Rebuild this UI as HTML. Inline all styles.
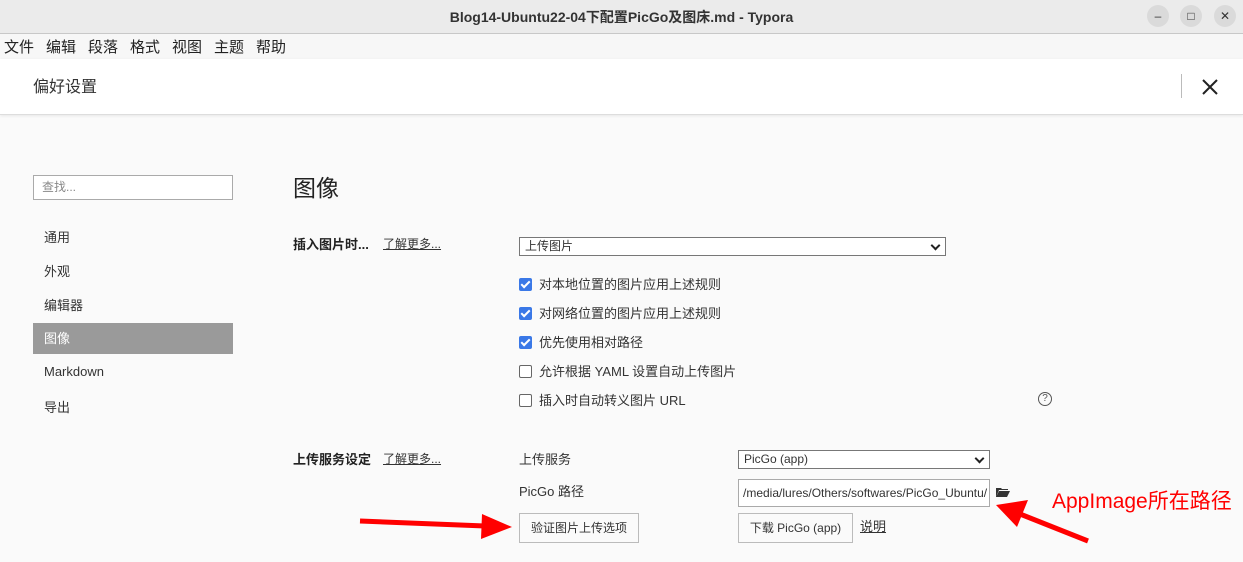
<!DOCTYPE html>
<html><head><meta charset="utf-8"><style>
*{box-sizing:border-box;margin:0;padding:0}
body{width:1243px;height:562px;overflow:hidden;background:#fafafa;font-family:"Liberation Sans","Noto Sans CJK SC",sans-serif;font-size:13px;color:#333;position:relative;line-height:1.3}
.a{position:absolute;white-space:nowrap}
.title{left:0;top:0;width:1243px;height:34px;background:#ebebeb;border-bottom:1px solid #c8c8c8;text-align:center;line-height:34px;font-weight:bold;font-size:14px;color:#333}
.wb{width:22px;height:22px;border-radius:50%;background:#dadada;top:5px;text-align:center;line-height:22px;font-size:12px;color:#333}
.menu{left:0;top:34px;width:1243px;height:25px;background:#f7f7f7}
.m{top:38px;font-size:15px;color:#222}
.hdr{left:0;top:59px;width:1243px;height:56px;background:#fff;border-bottom:1px solid #ddd;box-shadow:0 1px 3px rgba(0,0,0,.08)}
.side{left:44px;font-size:13px;color:#333}
.cb{width:13px;height:13px;border-radius:2px;left:519px}
.cb.on{background:#3a78e7}
.cb.off{border:1px solid #666;background:#fff}
.cb.on::after{content:"";position:absolute;left:4px;top:1px;width:3px;height:7px;border:solid #fff;border-width:0 2px 2px 0;transform:rotate(45deg)}
.sel{border:1px solid #777;background:#fff;height:19px;line-height:17px;padding-left:5px;font-size:12px}
.sel::after{content:"";position:absolute;right:6px;top:4px;width:5px;height:5px;border:solid #222;border-width:0 2px 2px 0;transform:rotate(45deg)}
.btn{border:1px solid #bbb;background:#fafafa;height:30px;line-height:28px;text-align:center;font-size:12px}
u{text-decoration:underline}
</style></head><body>
<div class="a title">Blog14-Ubuntu22-04下配置PicGo及图床.md - Typora</div>
<div class="a wb" style="left:1147px">–</div>
<div class="a wb" style="left:1180px">□</div>
<div class="a wb" style="left:1214px">✕</div>
<div class="a menu"></div>
<div class="a m" style="left:4px">文件</div>
<div class="a m" style="left:46px">编辑</div>
<div class="a m" style="left:88px">段落</div>
<div class="a m" style="left:130px">格式</div>
<div class="a m" style="left:172px">视图</div>
<div class="a m" style="left:214px">主题</div>
<div class="a m" style="left:256px">帮助</div>
<div class="a hdr"></div>
<div class="a" style="left:33px;top:78px;font-size:16px;color:#333">偏好设置</div>
<div class="a" style="left:1181px;top:74px;width:1px;height:24px;background:#bbb"></div>
<svg class="a" style="left:1202px;top:79px" width="16" height="16"><path d="M1 1L15 15M15 1L1 15" stroke="#222" stroke-width="2"/></svg>

<div class="a" style="left:33px;top:175px;width:200px;height:25px;border:1px solid #aaa;background:#fff;padding-left:8px;line-height:23px;color:#888;font-size:12px">查找...</div>
<div class="a side" style="top:230px">通用</div>
<div class="a side" style="top:264px">外观</div>
<div class="a side" style="top:298px">编辑器</div>
<div class="a" style="left:33px;top:323px;width:200px;height:31px;background:#9a9a9a"></div>
<div class="a side" style="top:331px;color:#fff">图像</div>
<div class="a side" style="top:364px">Markdown</div>
<div class="a side" style="top:400px">导出</div>

<div class="a" style="left:293px;top:174px;font-size:23px;color:#222">图像</div>
<div class="a" style="left:293px;top:237px;font-weight:bold;color:#222">插入图片时...</div>
<div class="a" style="left:383px;top:237px;font-size:12px"><u>了解更多...</u></div>
<div class="a sel" style="left:519px;top:237px;width:427px">上传图片</div>

<div class="a cb on" style="top:278px"></div><div class="a" style="left:539px;top:277px">对本地位置的图片应用上述规则</div>
<div class="a cb on" style="top:307px"></div><div class="a" style="left:539px;top:306px">对网络位置的图片应用上述规则</div>
<div class="a cb on" style="top:336px"></div><div class="a" style="left:539px;top:335px">优先使用相对路径</div>
<div class="a cb off" style="top:365px"></div><div class="a" style="left:539px;top:364px">允许根据 YAML 设置自动上传图片</div>
<div class="a cb off" style="top:394px"></div><div class="a" style="left:539px;top:393px">插入时自动转义图片 URL</div>
<div class="a" style="left:1038px;top:392px;width:14px;height:14px;border:1px solid #555;border-radius:50%;font-size:10px;line-height:12px;text-align:center;color:#555">?</div>

<div class="a" style="left:293px;top:452px;font-weight:bold;color:#222">上传服务设定</div>
<div class="a" style="left:383px;top:452px;font-size:12px"><u>了解更多...</u></div>
<div class="a" style="left:519px;top:452px">上传服务</div>
<div class="a sel" style="left:738px;top:450px;width:252px">PicGo (app)</div>
<div class="a" style="left:519px;top:484px">PicGo 路径</div>
<div class="a" style="left:738px;top:479px;width:252px;height:28px;border:1px solid #aaa;background:#fff;padding-left:4px;line-height:26px;font-size:12px;overflow:hidden">/media/lures/Others/softwares/PicGo_Ubuntu/</div>
<svg class="a" style="left:996px;top:487px" width="14" height="11"><path d="M0 1H5L6 2H12V3H3L0 10Z M3 4H14L11 10H0Z" fill="#333"/></svg>
<div class="a btn" style="left:519px;top:513px;width:120px">验证图片上传选项</div>
<div class="a btn" style="left:738px;top:513px;width:115px">下载 PicGo (app)</div>
<div class="a" style="left:860px;top:519px"><u>说明</u></div>

<svg class="a" style="left:0;top:0" width="1243" height="562">
<line x1="360" y1="521" x2="485" y2="526" stroke="#f00" stroke-width="5"/>
<polygon points="482,514 512,527 481,539" fill="#f00"/>
<line x1="1088" y1="541" x2="1020" y2="514" stroke="#f00" stroke-width="5"/>
<polygon points="996,505 1028,500 1017,527" fill="#f00"/>
</svg>
<div class="a" style="left:1052px;top:488px;font-size:21px;color:#f00">AppImage所在路径</div>
</body></html>
